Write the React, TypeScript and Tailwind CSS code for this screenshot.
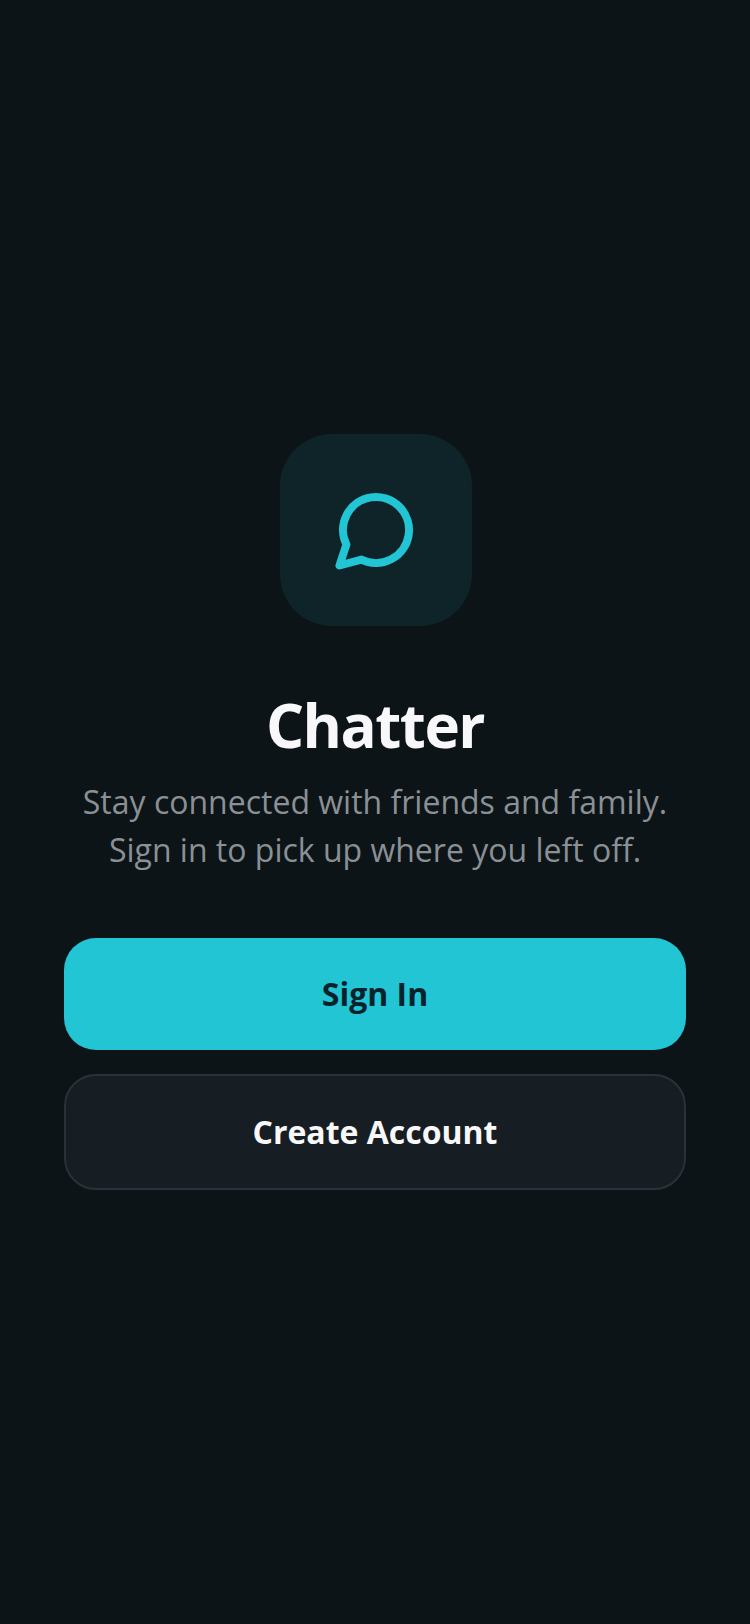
export default function App() {
  const font = { fontFamily: '"Open Sans", sans-serif' };
  return (
    <div style={font} className="min-h-[1624px] bg-[#0d1417] flex flex-col items-center justify-center px-16">
      <div className="ml-0.5 w-48 h-48 rounded-[52px] bg-[#0f2429] flex items-center justify-center">
        <svg width="96" height="96" viewBox="0 0 96 96" fill="none" stroke="#22c5d4" strokeWidth="8" strokeLinejoin="round" strokeLinecap="round">
          <path d="M18.4 62.6 L11.5 83.5 L33.4 77.6 A33 33 0 1 0 18.4 62.6Z" />
        </svg>
      </div>
      <h1 className="mt-[57px] text-[60px] leading-[84px] font-bold tracking-tight text-[#f8f8fa]">Chatter</h1>
      <p className="mt-[11px] text-[32px] leading-[48px] text-[#8a9095] text-center">
        Stay connected with friends and family.
        <br />
        Sign in to pick up where you left off.
      </p>
      <button className="mt-16 w-full h-[112px] rounded-[32px] bg-[#22c5d4] text-[32px] font-bold text-[#06232b]">
        Sign In
      </button>
      <button className="mt-6 w-full h-[116px] rounded-[32px] bg-[#161d23] border-2 border-[#2a3138] text-[32px] font-bold text-[#f8f8fa]">
        Create Account
      </button>
    </div>
  );
}
